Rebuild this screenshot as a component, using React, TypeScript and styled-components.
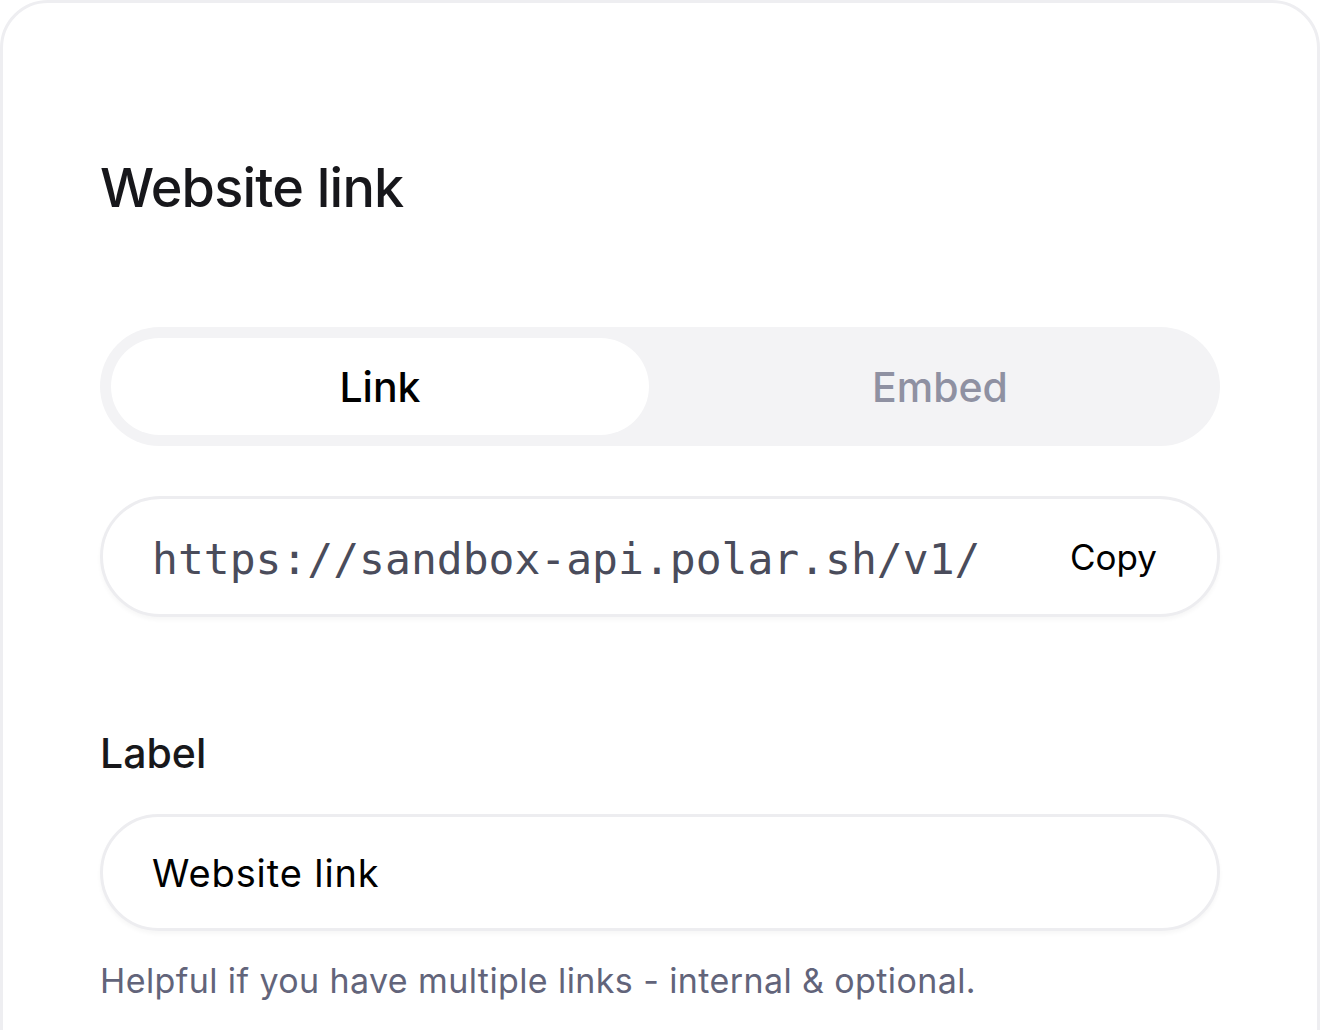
import React from "react";
import styled, { createGlobalStyle } from "styled-components";

const Global = createGlobalStyle`
  html, body {
    margin: 0;
    padding: 0;
    background: #ffffff;
    font-family: Inter, "Noto Sans", sans-serif;
    -webkit-font-smoothing: antialiased;
  }
  * { box-sizing: border-box; }
`;

const Card = styled.section`
  width: 1320px;
  min-height: 1100px;
  border: 3px solid #eeeef1;
  border-radius: 48px;
  background: #ffffff;
  padding: 152px 97px 0 97px;
  display: flex;
  flex-direction: column;
`;

const Title = styled.h2`
  margin: 0;
  font-size: 54px;
  line-height: 65px;
  font-weight: 500;
  color: #17171b;
  letter-spacing: -0.8px;
`;

const Tabs = styled.div`
  margin-top: 107px;
  height: 119px;
  border-radius: 60px;
  background: #f3f3f5;
  padding: 11px;
  display: grid;
  grid-template-columns: 1fr 1fr;
  gap: 22px;
`;

const Tab = styled.button<{ $active?: boolean }>`
  border: none;
  border-radius: 50px;
  background: ${(p) => (p.$active ? "#ffffff" : "transparent")};
  color: ${(p) => (p.$active ? "#000000" : "#8f91a2")};
  font-family: Inter, "Noto Sans", sans-serif;
  font-size: 41px;
  font-weight: 500;
  display: flex;
  align-items: center;
  justify-content: center;
  padding: 0;
  cursor: pointer;
`;

const Field = styled.div<{ $h: number }>`
  height: ${(p) => p.$h}px;
  border: 3px solid #ededf0;
  border-radius: 64px;
  background: #ffffff;
  box-shadow: 0 3px 4px rgba(0, 0, 0, 0.035);
  display: flex;
  align-items: center;
  padding: 0 60px 0 49px;
  overflow: hidden;
`;

const UrlField = styled(Field)`
  margin-top: 50px;
`;

const UrlText = styled.span`
  flex: 1;
  min-width: 0;
  white-space: nowrap;
  overflow: hidden;
  font-family: "DejaVu Sans Mono", "Liberation Mono", monospace;
  font-size: 43px;
  color: #4a4c5b;
  padding-top: 4px;
`;

const CopyButton = styled.button`
  border: none;
  background: transparent;
  padding: 0;
  font-family: Inter, "Noto Sans", sans-serif;
  font-size: 35px;
  font-weight: 400;
  color: #000000;
  cursor: pointer;
`;

const FieldLabel = styled.label`
  margin-top: 111px;
  font-size: 41px;
  line-height: 50px;
  font-weight: 500;
  color: #18181b;
`;

const LabelField = styled(Field)`
  margin-top: 36px;
`;

const LabelInput = styled.input`
  flex: 1;
  border: none;
  outline: none;
  background: transparent;
  padding: 0;
  font-family: Inter, "Noto Sans", sans-serif;
  font-size: 38px;
  letter-spacing: 0.9px;
  color: #000000;
`;

const Help = styled.p`
  margin: 29px 0 0 0;
  font-size: 34px;
  line-height: 41px;
  letter-spacing: 0.4px;
  color: #62647a;
`;

export default function App() {
  return (
    <>
      <Global />
      <Card>
        <Title>Website link</Title>
        <Tabs>
          <Tab $active>Link</Tab>
          <Tab>Embed</Tab>
        </Tabs>
        <UrlField $h={121}>
          <UrlText>https://sandbox-api.polar.sh/v1/</UrlText>
          <CopyButton>Copy</CopyButton>
        </UrlField>
        <FieldLabel>Label</FieldLabel>
        <LabelField $h={117}>
          <LabelInput defaultValue="Website link" />
        </LabelField>
        <Help>Helpful if you have multiple links - internal &amp; optional.</Help>
      </Card>
    </>
  );
}
